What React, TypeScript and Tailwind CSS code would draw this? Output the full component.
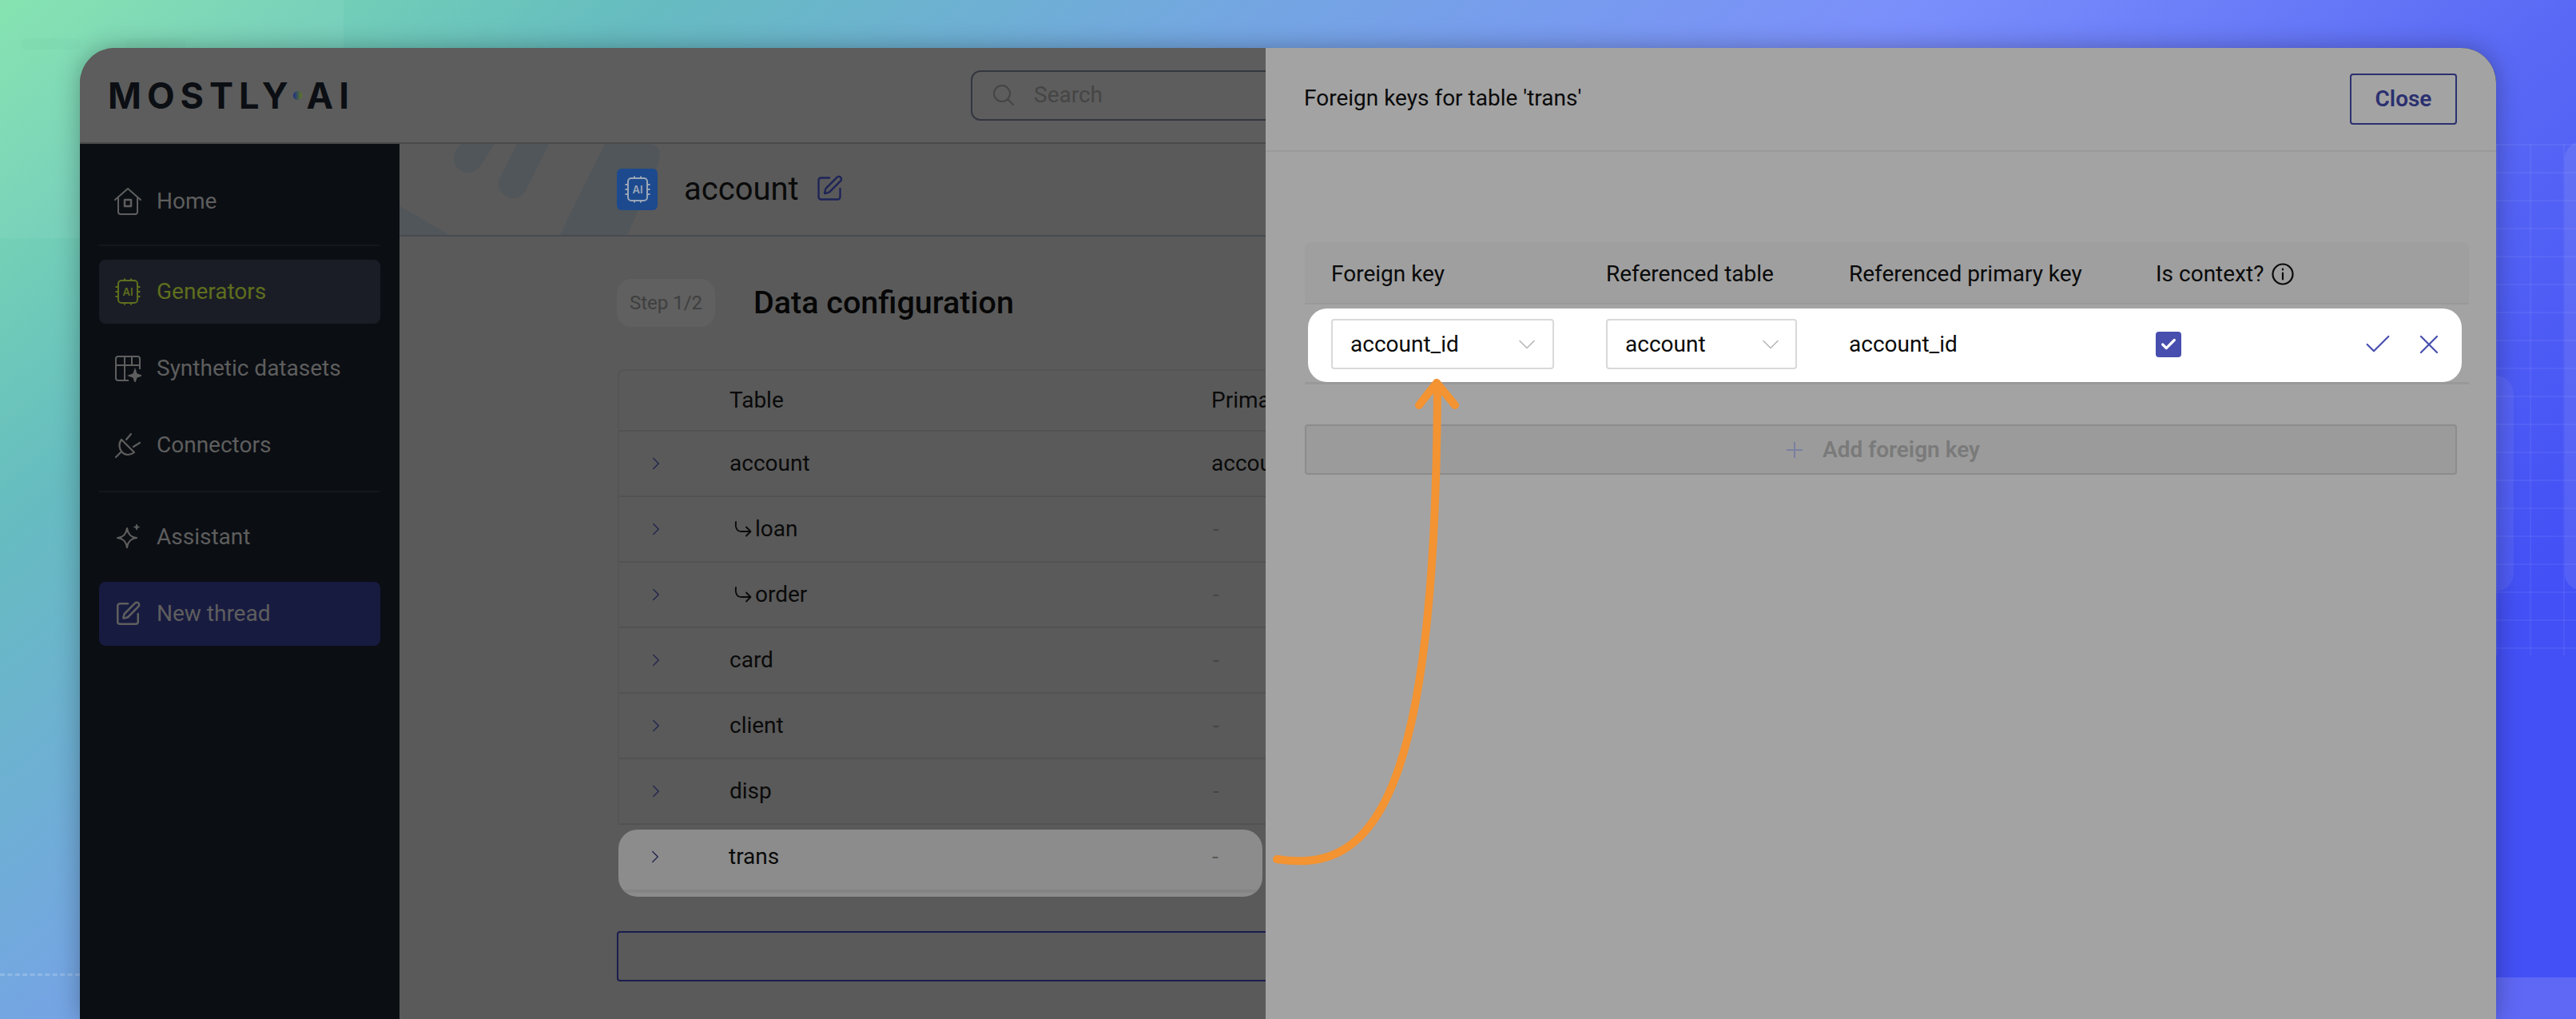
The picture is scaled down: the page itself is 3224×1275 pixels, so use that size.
import { Check, ChevronDown, ChevronRight, Plus, SquarePen, X } from "lucide-react";

function ChipIcon({ className }: { className?: string }) {
  return (
    <svg viewBox="0 0 34 34" fill="none" stroke="currentColor" strokeWidth="2" className={className}>
      <rect x="5" y="3" width="24" height="28" rx="4" />
      <path d="M13 0.5v2.5M21 0.5v2.5M13 31v2.5M21 31v2.5M1.5 11h3.5M1.5 17h3.5M1.5 23h3.5M29 11h3.5M29 17h3.5M29 23h3.5" />
      <text x="17" y="22" textAnchor="middle" fontSize="13" fontWeight="600" fill="currentColor" stroke="none" fontFamily="Inter, sans-serif">AI</text>
    </svg>
  );
}

function HomeIcon() {
  return (
    <svg viewBox="0 0 34 34" fill="none" stroke="currentColor" strokeWidth="2" strokeLinejoin="round" strokeLinecap="round" className="w-[34px] h-[34px]">
      <path d="M1 15L17 1l16 14" />
      <path d="M5 13v17a3 3 0 0 0 3 3h18a3 3 0 0 0 3-3V13" />
      <rect x="13" y="15" width="8" height="8" strokeWidth="2.5" />
    </svg>
  );
}

function TableIcon() {
  return (
    <svg viewBox="0 0 34 34" fill="none" stroke="currentColor" strokeWidth="2" className="w-[34px] h-[34px]">
      <path d="M18 32H5a3 3 0 0 1-3-3V5a3 3 0 0 1 3-3h24a3 3 0 0 1 3 3v13M2 13h30M13 2v30M22 2v11" />
      <path d="M26 19l1.8 5.2L33 26l-5.2 1.8L26 33l-1.8-5.2L19 26l5.2-1.8z" fill="currentColor" />
    </svg>
  );
}

function PlugIcon() {
  return (
    <svg viewBox="0 0 34 34" fill="none" stroke="currentColor" strokeWidth="2.2" strokeLinecap="round" strokeLinejoin="round" className="w-[34px] h-[34px]">
      <path d="M2 32l6-6M9 10l16 16c-5 4-11 4-15 0S5 15 9 10zM15 10l6-7M24 19l8-5" />
    </svg>
  );
}

function SparkIcon() {
  return (
    <svg viewBox="0 0 34 34" fill="none" stroke="currentColor" strokeWidth="2.2" strokeLinejoin="round" strokeLinecap="round" className="w-[34px] h-[34px]">
      <path d="M16 6c1 7 4 11 12 12-8 1-11 5-12 12-1-7-4-11-12-12 8-1 11-5 12-12z" />
      <path d="M28 2v5M25.5 4.5h5" />
    </svg>
  );
}

function SearchIcon() {
  return (
    <svg viewBox="0 0 28 28" fill="none" stroke="currentColor" strokeWidth="2" strokeLinecap="round" className="w-[28px] h-[28px]">
      <circle cx="12" cy="12" r="10" />
      <path d="M19 19l7 7" />
    </svg>
  );
}

function InfoIcon() {
  return (
    <svg viewBox="0 0 28 28" fill="none" stroke="currentColor" strokeWidth="2.2" strokeLinecap="round" className="w-[28px] h-[28px]">
      <circle cx="14" cy="14" r="12.5" />
      <path d="M14 12.5v8M14 7.5v1" />
    </svg>
  );
}

function HookArrow() {
  return (
    <svg viewBox="0 0 24 24" fill="none" stroke="currentColor" strokeWidth="1.8" strokeLinecap="round" strokeLinejoin="round" className="ml-[5px] mr-[3px] w-[24px] h-[24px]">
      <path d="M3 3c-1 7 1 12 7 12h11" />
      <path d="M16 9.5l5.5 5.5-5.5 5.5" />
    </svg>
  );
}

function NavItem({ icon, label, className }: { icon: React.ReactNode; label: string; className?: string }) {
  return (
    <div className={`flex items-center gap-[19px] pl-[19px] rounded-[8px] ${className ?? ""}`}>
      <span className="w-[34px] flex justify-center">{icon}</span>
      <span>{label}</span>
    </div>
  );
}

const rows = [
  { name: "account", key: "account_id" },
  { name: "loan", sub: true, key: "-" },
  { name: "order", sub: true, key: "-" },
  { name: "card", key: "-" },
  { name: "client", key: "-" },
  { name: "disp", key: "-" },
];

export default function App() {
  return (
    <div className="relative w-[3224px] h-[1275px] overflow-hidden bg-[linear-gradient(141deg,#80e2ad_0%,#66bcc0_17%,#74a6e2_33%,#7b8ffb_50%,#5a6af5_67%,#4350f5_85%)] font-['Inter',sans-serif]">
      {/* backdrop bits */}
      <div className="absolute left-0 top-0 w-[430px] h-[298px] bg-white/[0.05]" />
      <div className="absolute left-[25px] top-[48px] w-[76px] h-[14px] rounded-full bg-black/[0.015]" />
      <div className="absolute left-[157px] top-[48px] w-[76px] h-[14px] rounded-full bg-black/[0.015]" />
      <div className="absolute left-0 w-[100px] top-[1218px] border-t-[3px] border-dashed border-white/20" />
      <div className="absolute left-[3124px] top-[180px] w-[100px] h-[640px] bg-[linear-gradient(to_right,rgba(255,255,255,0.05)_2px,transparent_2px),linear-gradient(to_bottom,rgba(255,255,255,0.05)_2px,transparent_2px)] bg-[length:42px_35px]" />
      <div className="absolute left-[3210px] top-[178px] w-[40px] h-[560px] rounded-[20px] bg-white/[0.09]" />
      <div className="absolute left-[3100px] top-[470px] w-[46px] h-[270px] rounded-[24px] bg-white/[0.06]" />
      <div className="absolute left-[3124px] right-0 top-[1223px] h-[52px] bg-[#5f68f5]" />

      <div className="relative ml-[100px] mt-[60px] w-[3024px] h-[1215px] rounded-t-[44px] overflow-hidden bg-[#5a5a5a] shadow-[0_0_30px_rgba(0,0,0,0.3)]">
        <div className="flex flex-col h-full">
          {/* top bar */}
          <div className="h-[120px] flex items-center shrink-0 bg-[#5d5d5d] border-b-2 border-[#4a4a4a]">
            <div className="w-[1115px] pl-[35px] pt-[1px] flex items-center text-[45px] font-bold leading-none text-[#0b0e13] tracking-[7px]">
              <span>MOSTLY</span>
              <span className="w-[11px] h-[11px] rounded-full bg-[linear-gradient(to_right,#1c2f8a,#5f7d1e)] mr-[6px] -ml-[1px]" />
              <span>AI</span>
            </div>
            <div className="flex-1 h-[63px] flex items-center gap-[24px] pl-[25px] rounded-l-[12px] border-2 border-[#343640] text-[#454545] text-[28px]">
              <SearchIcon />
              <span className="font-['Roboto',sans-serif]">Search</span>
            </div>
          </div>

          <div className="flex flex-1">
            {/* sidebar */}
            <div className="w-[400px] bg-[#0b0e13] text-[#5e5e5e] text-[28px] font-['Roboto',sans-serif] flex flex-col px-[24px] pt-[37px]">
              <NavItem icon={<HomeIcon />} label="Home" className="h-[70px]" />
              <div className="h-[2px] bg-[#14171d] mt-[19px] mb-[17px]" />
              <NavItem icon={<ChipIcon className="w-[34px] h-[34px]" />} label="Generators" className="h-[80px] bg-[#1a1d26] text-[#5f6e1d]" />
              <NavItem icon={<TableIcon />} label="Synthetic datasets" className="h-[70px] mt-[21px]" />
              <NavItem icon={<PlugIcon />} label="Connectors" className="h-[70px] mt-[26px]" />
              <div className="h-[2px] bg-[#14171d] mt-[22px] mb-[21px]" />
              <NavItem icon={<SparkIcon />} label="Assistant" className="h-[70px]" />
              <NavItem icon={<SquarePen className="w-[34px] h-[34px]" strokeWidth={1.8} />} label="New thread" className="h-[80px] mt-[21px] bg-[#181b40]" />
            </div>

            {/* main area */}
            <div className="flex-1 flex flex-col">
              <div className="relative h-[116px] shrink-0 flex items-center gap-[33px] pl-[272px] border-b-2 border-[#484b4f] overflow-hidden">
                <svg viewBox="0 0 340 116" fill="none" className="absolute left-0 top-0 w-[340px] h-[116px]">
                  <path d="M0 78L66 116H0z" fill="#50565a" />
                  <path d="M104 -10L86 18" stroke="#50565a" strokeWidth="36" strokeLinecap="round" />
                  <path d="M172 -10L142 50" stroke="#50565a" strokeWidth="36" strokeLinecap="round" />
                  <path d="M257 0H310Q335 0 320 35L284 116H200z" fill="#50565a" />
                  <circle cx="265" cy="86" r="20" fill="#50565a" />
                </svg>
                <div className="relative w-[51px] h-[52px] rounded-[6px] bg-[#1d4a8e] text-[#9aa6b8] flex items-center justify-center">
                  <ChipIcon className="w-[34px] h-[34px]" />
                </div>
                <span className="relative text-[40px] font-['Roboto',sans-serif] text-[#0a0a0a]">account</span>
                <SquarePen className="relative -ml-[13px] -mt-[3px] w-[36px] h-[36px] text-[#1e2458]" strokeWidth={1.6} />
              </div>

              <div className="pl-[272px] pt-[53px] font-['Roboto',sans-serif]">
                <div className="flex items-center gap-[48px]">
                  <span className="w-[123px] h-[60px] flex items-center justify-center rounded-[18px] bg-[#606060] text-[#3f3f3f] text-[24px]">Step 1/2</span>
                  <span className="text-[39.5px] font-medium text-[#060606]">Data configuration</span>
                </div>

                <div className="mt-[53px] ml-[1px] rounded-t-[8px] border-l-2 border-t-2 border-[#555555] text-[28px] text-[#0a0a0a]">
                  <div className="h-[76px] grid grid-cols-[138px_603px_1fr] items-center border-b-2 border-[#525252]">
                    <span />
                    <span>Table</span>
                    <span>Primary key</span>
                  </div>
                  {rows.map((r) => (
                    <div key={r.name} className="h-[82px] grid grid-cols-[138px_603px_1fr] items-center border-b-2 border-[#525252]">
                      <ChevronRight className="justify-self-center -ml-[47px] w-[26px] h-[26px] text-[#23264f]" strokeWidth={1.3} />
                      <span className="flex items-center">
                        {r.sub && <HookArrow />}
                        {r.name}
                      </span>
                      <span className={r.key === "-" ? "text-[#454545] pl-[2px]" : ""}>{r.key}</span>
                    </div>
                  ))}
                </div>

                <div className="mt-[6px] ml-[2px] w-[806px] h-[84px] rounded-[24px] overflow-hidden bg-[#8c8c8c] text-[28px] text-[#0a0a0a]">
                  <div className="h-[68px] grid grid-cols-[138px_603px_1fr] items-center">
                    <ChevronRight className="justify-self-center -ml-[47px] w-[26px] h-[26px] text-[#23264f]" strokeWidth={1.3} />
                    <span>trans</span>
                    <span className="text-[#5a5a5a] pl-[2px]">-</span>
                  </div>
                  <div className="h-[4px] mt-[7px] bg-[#848484]" />
                </div>

                <div className="mt-[43px] h-[63px] rounded-l-[4px] border-2 border-[#1a1d4e]" />
              </div>
            </div>
          </div>
        </div>

        {/* foreign key drawer */}
        <div className="absolute left-[1484px] top-0 bottom-0 w-[1540px] bg-[#a3a3a3] font-['Roboto',sans-serif] text-[28px] text-[#0a0a0a]">
          <div className="h-[130px] flex items-center justify-between pl-[48px] pr-[49px] border-b-2 border-[#999999]">
            <span className="-mt-[2px]">Foreign keys for table 'trans'</span>
            <button className="w-[134px] h-[64px] rounded-[4px] border-2 border-[#2b3070] text-[#2b3070] font-semibold">Close</button>
          </div>

          <div className="ml-[49px] mr-[49px] mt-[113px]">
            <div className="rounded-t-[8px] border-b-2 border-[#999999] bg-[#9f9f9f] -mr-[15px] h-[78px] grid grid-cols-[344px_304px_384px_1fr] items-center pl-[33px] pt-[3px]">
              <span>Foreign key</span>
              <span>Referenced table</span>
              <span>Referenced primary key</span>
              <span className="flex items-center gap-[10px]">Is context? <InfoIcon /></span>
            </div>

            <div className="mt-[5px] ml-[4px] -mr-[6px] h-[92px] rounded-[24px] bg-white grid grid-cols-[344px_304px_384px_1fr] items-center pl-[29px]">
              <div className="w-[279px] h-[63px] -mt-[3px] flex items-center justify-between pl-[22px] pr-[14px] rounded-[4px] border-2 border-[#d9d9d9]">
                <span>account_id</span>
                <ChevronDown className="w-[36px] h-[36px] text-[#b5b5b5]" strokeWidth={1} />
              </div>
              <div className="w-[239px] h-[63px] -mt-[3px] flex items-center justify-between pl-[22px] pr-[13px] rounded-[4px] border-2 border-[#d9d9d9]">
                <span>account</span>
                <ChevronDown className="w-[36px] h-[36px] text-[#b5b5b5]" strokeWidth={1} />
              </div>
              <span className="-mt-[2px]">account_id</span>
              <div className="flex items-center justify-between pr-[21px] -mt-[2px]">
                <span className="w-[32px] h-[32px] rounded-[4px] bg-[#474eae] flex items-center justify-center">
                  <Check className="w-[22px] h-[22px] text-white" strokeWidth={3.5} />
                </span>
                <span className="flex items-center gap-[24px] text-[#474eae]">
                  <Check className="w-[40px] h-[40px]" strokeWidth={1.3} />
                  <X className="w-[40px] h-[40px]" strokeWidth={1.3} />
                </span>
              </div>
            </div>

            <div className="h-[3px] -mr-[15px] bg-[#999999]" />

            <div className="mt-[50px] h-[63px] flex items-center justify-center gap-[19px] rounded-[4px] border-2 border-[#8c8c8c] bg-[#9b9b9b] text-[#7a7a7a] font-semibold">
              <Plus className="w-[32px] h-[32px] text-[#7a80a0]" strokeWidth={1.5} />
              <span>Add foreign key</span>
            </div>
          </div>
        </div>
      </div>

      {/* callout arrow */}
      <svg viewBox="0 0 3224 1275" fill="none" stroke="#f39332" strokeWidth="10" strokeLinecap="round" strokeLinejoin="round" className="absolute left-0 top-0 w-[3224px] h-[1275px] pointer-events-none">
        <path d="M1598 1075C1720 1095 1797 1000 1799 482" />
        <path d="M1776 507L1798 479L1821 507" />
      </svg>
    </div>
  );
}
